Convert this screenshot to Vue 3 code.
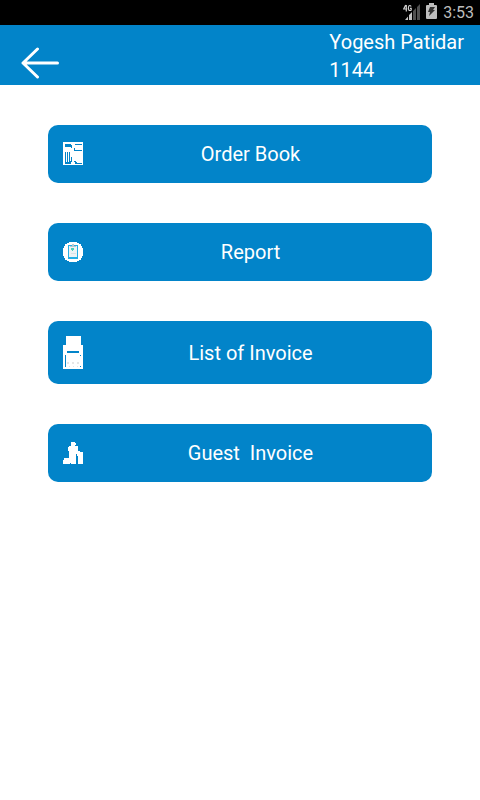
<script setup>
const user = { name: 'Yogesh Patidar', code: '1144' }
const actions = [
  { id: 'order', label: 'Order Book', width: 20, height: 24 },
  { id: 'report', label: 'Report', width: 20, height: 20 },
  { id: 'list', label: 'List of Invoice', width: 20, height: 33 },
  { id: 'guest', label: 'Guest\u00a0 Invoice', width: 20, height: 22 },
]
</script>

<template>
  <div class="screen">
    <div class="status">
      <svg width="17" height="17" viewBox="0 0 17 17" aria-hidden="true">
        <path d="M2 17L5 13.500V17Z M6 17V12L9 9V17Z" fill="#c4c4c4" />
        <path d="M10 17V8L13 5V17Z M14 17V4L17 1V17Z" fill="#505050" />
        <path d="M2.700 2L0.700 6H4.200M3.300 2V8.500M8.200 3.500Q7.600 2.500 6.600 2.500Q5.400 2.600 5.400 5Q5.400 7.500 6.800 7.500Q8 7.500 8.200 7V5.300H7" fill="none" stroke="#d0d0d0" stroke-width="1.200" />
      </svg>
      <svg width="11" height="16" viewBox="0 0 11 16" aria-hidden="true">
        <path d="M3 0H8V2H10Q11 2 11 3V15Q11 16 10 16H1Q0 16 0 15V3Q0 2 1 2H3Z" fill="#bdbdbd" />
        <path d="M4 4H9L7 7H9L3 13L4 9H2Z" fill="#333" />
      </svg>
      <time class="clock">3:53</time>
    </div>

    <header class="bar">
      <button class="back" type="button" aria-label="Back">
        <svg width="40" height="32" viewBox="0 0 40 32" aria-hidden="true">
          <path d="M17.500 2L3 16L17.500 30M3 16H37.500" fill="none" stroke="#fff" stroke-width="3" stroke-linecap="round" stroke-linejoin="round" />
        </svg>
      </button>
      <div class="user">
        <div>{{ user.name }}</div>
        <div>{{ user.code }}</div>
      </div>
    </header>

    <main class="menu">
      <button v-for="item in actions" :key="item.id" class="action" type="button">
        <svg
          :width="item.width"
          :height="item.height"
          :viewBox="`0 0 ${item.width} ${item.height}`"
          shape-rendering="crispEdges"
          aria-hidden="true"
        >
          <template v-if="item.id === 'order'">
            <path d="M0 0H20V23H0Z" fill="#fff" />
            <path
              d="M2 2H8V3H9V6H8V5H2Z M12 2H19V3H12Z M11 6H12V8H19V9H11Z M2 10H3V20H4V10H5V20H6V10H7V20H8V22H2Z M7 19H8V15H9V20H7Z M11 19H13V20H14V21H19V22H12V20H11Z"
              fill="#0284c9"
            />
          </template>
          <template v-else-if="item.id === 'report'">
            <path d="M6 0H14V1H16V2H18V4H19V6H20V14H19V16H18V18H16V19H14V20H6V19H4V18H2V16H1V14H0V6H1V4H2V2H4V1H6Z" fill="#fff" />
            <path d="M5 3H15V17H5Z" fill="#24aee5" />
            <path d="M6 4H14V15H6Z" fill="#eef3f5" />
            <path d="M7 4H13V5H7Z M9 2H11V4H9Z" fill="#bac8d0" />
            <path d="M8 6H11V8H10V9H9V8H8Z" fill="#4bd0bd" />
            <path d="M8 11H13V12H8Z" fill="#dce2e6" />
          </template>
          <template v-else-if="item.id === 'list'">
            <path d="M3 0H18V9H20V33H0V9H3Z" fill="#fff" />
            <path d="M4 15H16V17H4Z M2 19H3V31H2Z M17 19H18V20H17Z M17 30H18V31H17Z" fill="#0284c9" />
            <path d="M4 26H6V28H4Z M9 26H11V28H9Z M14 26H16V28H14Z M6 30H7V31H6Z M10 30H11V31H10Z M14 30H15V31H14Z" fill="#e6e6e6" />
          </template>
          <template v-else>
            <path
              d="M8 0H12V1H13V3H12V4H15V9H17V10H20V22H15V12H13V22H8V21H7V22H0V18H1V16H6V9H5V5H6V4H8Z"
              fill="#fff"
            />
            <path d="M14 12H15V14H14Z" fill="#fff" />
          </template>
        </svg>
        <span class="label">{{ item.label }}</span>
      </button>
    </main>
  </div>
</template>

<style>
body {
  margin: 0;
  background: #fff;
}
</style>

<style scoped>
.screen {
  font-family: Roboto, "Liberation Sans", sans-serif;
  color: #fff;
}

.status {
  display: flex;
  align-items: center;
  justify-content: flex-end;
  gap: 6px;
  box-sizing: border-box;
  height: 25px;
  padding: 0 6px 3px;
  background: #000;
  color: #bdbdbd;
}

.clock {
  font-size: 16px;
  line-height: 22px;
  padding-top: 3px;
}

.bar {
  display: flex;
  justify-content: space-between;
  align-items: flex-start;
  height: 60px;
  background: #0284c9;
}

.back {
  display: flex;
  margin: 22px 0 0 20px;
  padding: 0;
  border: 0;
  background: none;
  cursor: pointer;
}

.user {
  padding: 3px 16px 0 0;
  font-size: 20px;
  line-height: 28px;
}

.menu {
  display: flex;
  flex-direction: column;
  gap: 40px;
  padding: 40px 10%;
}

.action {
  display: flex;
  align-items: center;
  padding: 15px 14px 15px 15px;
  border: 0;
  border-radius: 10px;
  background: #0284c9;
  color: #fff;
  font-family: inherit;
  font-size: 20px;
  line-height: 27px;
  cursor: pointer;
}

.label {
  flex: 1;
  padding-top: 1px;
  text-align: center;
}
</style>
